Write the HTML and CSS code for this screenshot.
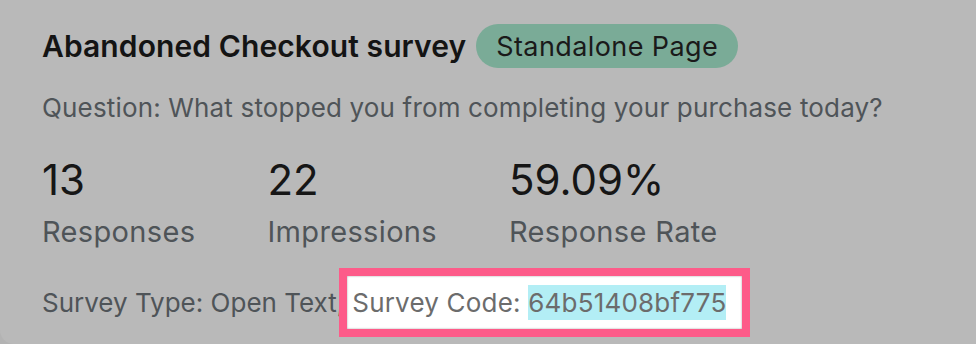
FILE: index.html
```html
<!DOCTYPE html>
<html lang="en">
<head>
<meta charset="utf-8">
<title>Abandoned Checkout survey</title>
<link rel="stylesheet" href="styles.css">
</head>
<body>
<div class="card">
  <div class="head">
    <h1 class="title">Abandoned Checkout survey</h1>
    <span class="badge">Standalone Page</span>
  </div>
  <p class="question">Question: What stopped you from completing your purchase today?</p>
  <div class="stats">
    <div class="stat"><div class="num">13</div><div class="label">Responses</div></div>
    <div class="stat"><div class="num">22</div><div class="label">Impressions</div></div>
    <div class="stat"><div class="num">59.09%</div><div class="label">Response Rate</div></div>
  </div>
  <div class="meta">
    <span class="type">Survey Type: Open Text,</span><span class="code-box">Survey Code: <span class="code">64b51408bf775</span></span>
  </div>
</div>
</body>
</html>
```
FILE: styles.css
```css
html, body {
  margin: 0;
  padding: 0;
  background: #b3b3b3;
  font-family: Inter, "Noto Sans", sans-serif;
  overflow: hidden;
}
.card {
  width: 976px;
  height: 344px;
  box-sizing: border-box;
  padding: 24px 0 0 42px;
  display: flex;
  flex-direction: column;
  background: #b9b9b9;
  border-bottom-left-radius: 14px;
}
.head {
  display: flex;
  align-items: center;
  gap: 10px;
  height: 44px;
}
.title {
  margin: 0;
  font-size: 30px;
  font-weight: 600;
  color: #141414;
  letter-spacing: 0.1px;
}
.badge {
  display: inline-flex;
  align-items: center;
  height: 44px;
  padding: 0 20px;
  border-radius: 22px;
  background: #7aab97;
  color: #1a1a1a;
  font-size: 27px;
  letter-spacing: 0.4px;
}
.question {
  margin: 25px 0 0;
  font-size: 26px;
  letter-spacing: 0.16px;
  color: #4f5458;
  line-height: 30px;
}
.stats {
  display: flex;
  gap: 72px;
  margin-top: 33px;
}
.num {
  font-size: 42px;
  line-height: 48px;
  color: #161616;
}
.label {
  margin-top: 10px;
  font-size: 29px;
  letter-spacing: 0.35px;
  line-height: 36px;
  color: #4f5458;
}
.meta {
  display: flex;
  align-items: center;
  margin-top: 18px;
  font-size: 26px;
  color: #4f5458;
}
.code-box {
  display: inline-flex;
  align-items: center;
  height: 53px;
  margin-left: -5px;
  padding: 0 16px 0 5px;
  border: 8px solid #fd5b89;
  background: #ffffff;
  box-shadow: inset 0 0 2px #9a9a9a;
  color: #6c6c6c;
  letter-spacing: 0.2px;
  white-space: pre;
}
.code {
  background: #b3eef5;
  line-height: 35px;
}
```
